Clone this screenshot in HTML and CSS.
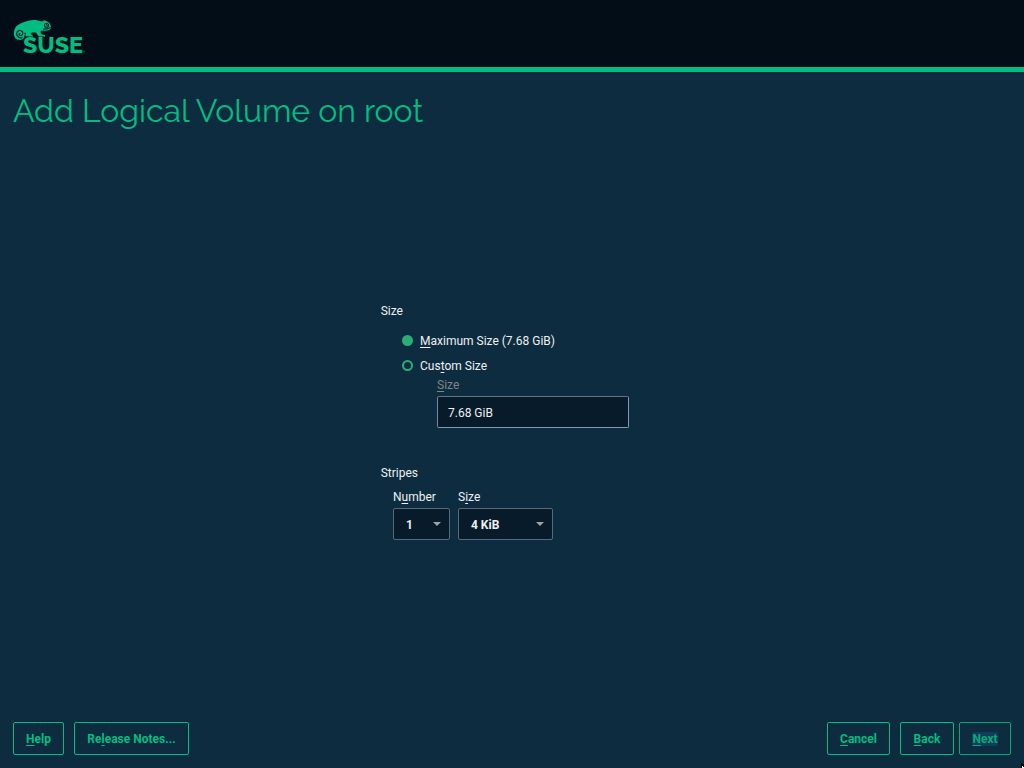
FILE: index.html
```html
<!DOCTYPE html>
<html lang="en">
<head>
<meta charset="utf-8">
<title>Add Logical Volume on root</title>
<link rel="stylesheet" href="styles.css">
</head>
<body>
<header class="banner">
  <svg class="logo" width="80" height="46" viewBox="0 0 80 46" role="img" aria-label="SUSE">
    <path class="skin" d="M1 15C1 9 5 6 10 4.500C16 1.500 23 1 29 3.500L31 2.200C34 3 37 4.500 37.500 7L38 10C37 13 32 13 28 12.800C27 14.500 28 16 29 16.500L32 17V18.500H26C24 17.500 24.500 15.500 23 14.500H19C17 15.500 18 17 20 17.500V18.500H14C12 18 12 16.500 13 15L11.500 14.500C12.500 18.500 10.500 21.800 7 22C3 22 .5 19 1 15Z"/>
    <path class="groove" d="M9.500 19.500C5.500 21 2.500 17 4.200 14C6.500 10.800 10.500 13 9.700 16C8.800 18.500 5.500 17.800 6.100 15.600L7.500 15.200"/>
    <circle class="groove" cx="33.500" cy="7.200" r="2"/>
    <circle class="pupil" cx="33.800" cy="7" r=".8"/>
    <path class="groove" d="M30 11C33 11.500 35 10.800 37.500 9.500"/>
    <text class="wordmark" x="10" y="34.500" textLength="60" lengthAdjust="spacingAndGlyphs">SUSE</text>
    <circle class="skin" cx="71" cy="33.500" r=".8" opacity=".6"/>
  </svg>
</header>
<h1 class="title">Add Logical Volume on root</h1>
<main class="content">
  <section class="group">
    <h2 class="caption">Size</h2>
    <div class="choices">
      <div class="choice"><i class="radio checked"></i><span><u>M</u>aximum Size (7.68 GiB)</span></div>
      <div class="choice"><i class="radio"></i><span>Cus<u>t</u>om Size</span></div>
    </div>
    <div class="custom">
      <span class="label muted"><u>S</u>ize</span>
      <div class="input">7.68 GiB</div>
    </div>
  </section>
  <section class="group">
    <h2 class="caption">Stripes</h2>
    <div class="fields">
      <div class="field">
        <span class="label">N<u>u</u>mber</span>
        <div class="select number"><span>1</span><i class="arrow"></i></div>
      </div>
      <div class="field">
        <span class="label">S<u>i</u>ze</span>
        <div class="select size"><span>4 KiB</span><i class="arrow"></i></div>
      </div>
    </div>
  </section>
</main>
<footer class="actions">
  <button class="button help"><span><u>H</u>elp</span></button>
  <button class="button notes"><span>Re<u>l</u>ease Notes...</span></button>
  <button class="button cancel"><span><u>C</u>ancel</span></button>
  <button class="button back"><span><u>B</u>ack</span></button>
  <button class="button next"><span><u>N</u>ext</span></button>
</footer>
<svg class="pointer" width="3" height="5" viewBox="0 0 3 5"><path fill="#000" d="M0 0H1L3 2V5H0Z"/><path fill="#fff" d="M1 3H2V4H3V5H1Z"/></svg>
</body>
</html>
```
FILE: styles.css
```css
* { box-sizing: border-box; }
body {
  margin: 0;
  height: 768px;
  overflow: hidden;
  display: flex;
  flex-direction: column;
  position: relative;
  background: #0d2c40;
  color: #eef0f2;
  font: 12px/14px Roboto, "Liberation Sans", sans-serif;
}
u {
  text-decoration: underline 1px;
  text-underline-offset: 2px;
  text-decoration-skip-ink: none;
}
.banner {
  flex: none;
  height: 72px;
  padding: 18px 0 0 13px;
  background: #020d18;
  border-bottom: 5px solid #02bc82;
}
.logo { display: block; }
.skin, .wordmark { fill: #02bc82; }
.wordmark { font: 800 22px Raleway, Inter, sans-serif; }
.groove { fill: none; stroke: #04222a; stroke-width: 1.1; }
.pupil { fill: #04222a; }
.title {
  margin: 19px 0 0 13px;
  height: 40px;
  color: #02bc82;
  font: 400 32px/40px Raleway, Lato, sans-serif;
  letter-spacing: -.03px;
  white-space: nowrap;
}
.content {
  flex: 1;
  width: 249px;
  margin: 173px 0 0 380px;
}
.group { margin-bottom: 38px; }
.caption { margin: 0; padding-left: .7px; font: inherit; }
.choices {
  display: flex;
  flex-direction: column;
  gap: 11px;
  padding: 16px 0 0 22px;
}
.choice { display: flex; align-items: flex-start; gap: 7px; }
.radio {
  width: 11px;
  height: 11px;
  margin-top: 1px;
  border: 2px solid #2bad76;
  border-radius: 50%;
}
.radio.checked { background: #2bad76; }
.custom { padding: 5px 0 0 57px; }
.label { display: block; }
.muted { color: #818487; }
.input {
  height: 32px;
  margin-top: 4px;
  padding: 9px 10px;
  background: #081b2a;
  border: 1px solid #7f9bb0;
  border-top-color: #5d7485;
  border-left-color: #718a9c;
  border-radius: 2px;
}
.fields { display: flex; gap: 8px; padding: 10px 0 0 13px; }
.select {
  display: flex;
  align-items: center;
  justify-content: space-between;
  height: 32px;
  margin-top: 4px;
  padding: 1px 8px 0 12px;
  background: #081b2a;
  border: 1px solid #556b7b;
  border-radius: 2px;
  font-weight: 700;
}
.number { width: 57px; }
.size { width: 95px; }
.arrow {
  border: 4px solid transparent;
  border-top-color: #a0a2a4;
  border-bottom: 0;
  margin-bottom: 1px;
}
.actions {
  flex: none;
  display: flex;
  padding: 0 13px 13px;
}
.button {
  height: 33px;
  padding: 1px 0 0;
  background: transparent;
  border: 1px solid #02bc82;
  border-radius: 2px;
  color: #02bc82;
  font: 700 12px/14px Roboto, "Liberation Sans", sans-serif;
}
.help { width: 51px; }
.notes { width: 115px; margin-left: 10px; }
.cancel { width: 63px; margin-left: auto; }
.back { width: 54px; margin-left: 10px; }
.next { width: 52px; margin-left: 5px; border-color: #07a970; color: #07aa78; }
.next span { display: inline-block; background: #123d5a; border-radius: 2px; }
.pointer { position: absolute; right: 0; bottom: 0; }
```
